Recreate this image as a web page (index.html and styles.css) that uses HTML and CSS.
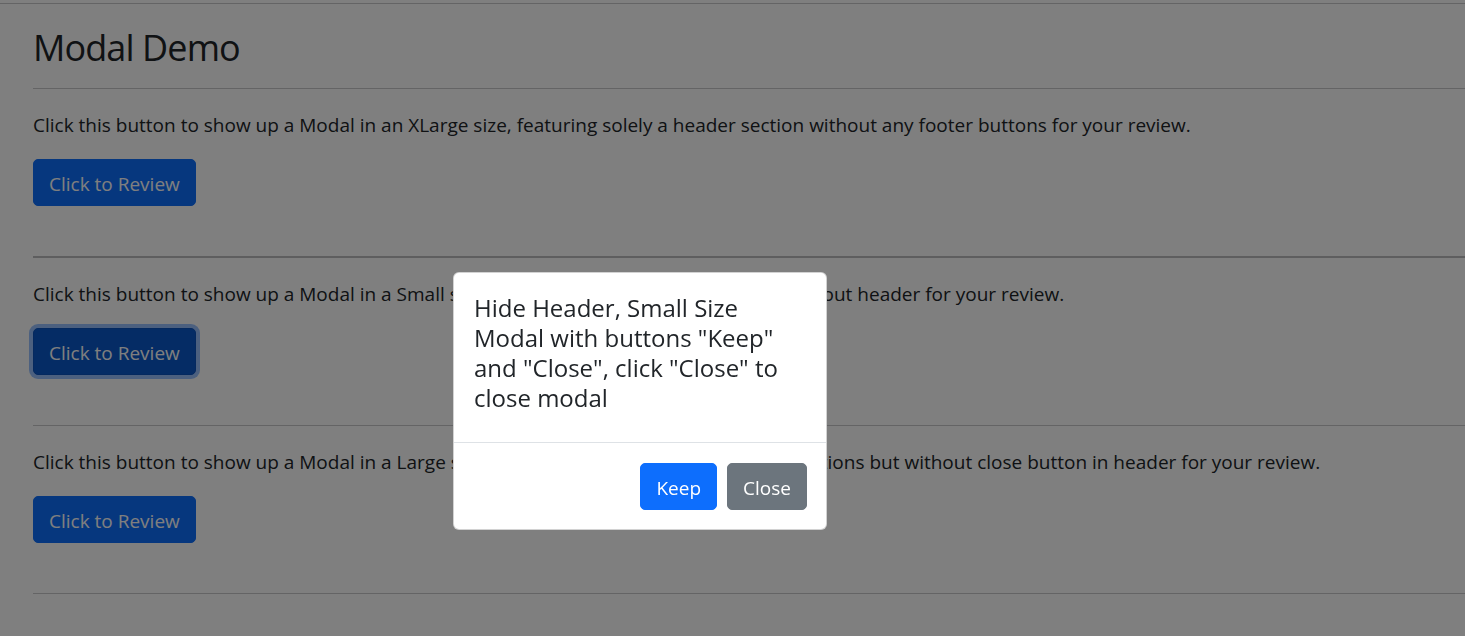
FILE: index.html
```html
<!DOCTYPE html>
<html lang="en">
<head>
<meta charset="utf-8">
<title>Modal Demo</title>
<link rel="stylesheet" href="styles.css">
</head>
<body>
<div class="frame">
  <main class="container">
    <h1 class="title">Modal Demo</h1>
    <section class="demo">
      <p class="lead">Click this button to show up a Modal in an XLarge size, featuring solely a header section without any footer buttons for your review.</p>
      <button class="btn btn-primary" type="button">Click to Review</button>
    </section>
    <section class="demo demo-thick">
      <p class="lead">Click this button to show up a Modal in a Small size, featuring two footer buttons but without header for your review.</p>
      <button class="btn btn-primary is-focused" type="button">Click to Review</button>
    </section>
    <section class="demo">
      <p class="lead">Click this button to show up a Modal in a Large size, featuring both header and footer sections but without close button in header for your review.</p>
      <button class="btn btn-primary" type="button">Click to Review</button>
    </section>
    <div class="demo-end"></div>
  </main>
</div>

<div class="backdrop"></div>

<div class="modal" role="dialog" aria-modal="true">
  <div class="modal-body">Hide Header, Small Size Modal with buttons "Keep" and "Close", click "Close" to close modal</div>
  <div class="modal-footer">
    <button class="btn btn-primary" type="button">Keep</button>
    <button class="btn btn-secondary" type="button">Close</button>
  </div>
</div>
</body>
</html>
```
FILE: styles.css
```css
* { box-sizing: border-box; }

html, body {
  margin: 0;
  padding: 0;
  background: #ffffff;
}

body {
  font-family: "Open Sans", "Noto Sans", sans-serif;
  color: #212529;
  overflow: hidden;
}

.frame {
  margin-top: 3px;
  border-top: 1px solid #c8c9ca;
}

.container {
  padding: 0 0 0 33px;
}

.title {
  margin: 22px 0 19px;
  font-size: 36px;
  line-height: 43px;
  font-weight: 500;
  letter-spacing: -0.9px;
  color: #212529;
}

.demo {
  border-top: 1px solid #c8c9ca;
  padding: 21px 0 50px;
}

.demo-thick {
  border-top: 2px solid #bcbdbe;
}

.demo-end {
  border-top: 1px solid #c8c9ca;
  height: 60px;
}

.lead {
  margin: 0 0 19px;
  font-size: 19px;
  line-height: 30px;
  white-space: nowrap;
}

.btn {
  display: inline-block;
  font-family: inherit;
  font-size: 19px;
  line-height: 29px;
  padding: 10px 15px 6px;
  border: 1px solid transparent;
  border-radius: 5px;
  cursor: pointer;
}

.btn-primary {
  color: #ffffff;
  background: #0d6efd;
  border-color: #0d6efd;
}

.btn-primary.is-focused {
  background: #0a58ca;
  border-color: #0a53be;
  box-shadow: 0 0 0 4px rgba(49, 132, 253, 0.5);
}

.btn-secondary {
  color: #ffffff;
  background: #6c757d;
  border-color: #6c757d;
}

.backdrop {
  position: fixed;
  inset: 0;
  background: rgba(0, 0, 0, 0.5);
}

.modal {
  position: fixed;
  left: 453px;
  top: 272px;
  width: 374px;
  background: #ffffff;
  border: 1px solid rgba(0, 0, 0, 0.175);
  border-radius: 6px;
  color: #212529;
}

.modal-body {
  padding: 20px 20px 29px;
  font-size: 24px;
  line-height: 30px;
}

.modal-footer {
  display: flex;
  justify-content: flex-end;
  gap: 10px;
  padding: 20px 19px 19px;
  border-top: 1px solid #dee2e6;
}
```
